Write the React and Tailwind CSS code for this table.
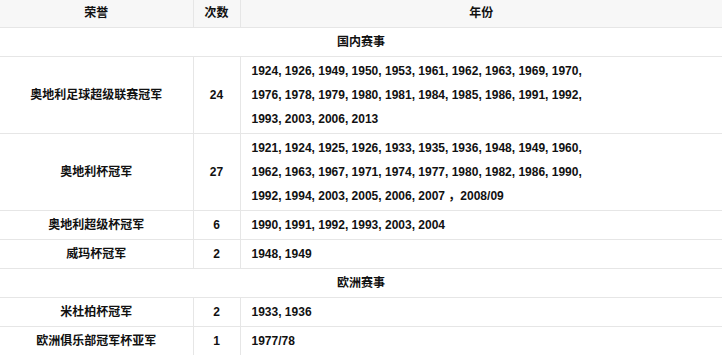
import React from "react";

const rows = [
  { section: "国内赛事" },
  {
    name: "奥地利足球超级联赛冠军",
    count: "24",
    years: [
      "1924, 1926, 1949, 1950, 1953, 1961, 1962, 1963, 1969, 1970,",
      "1976, 1978, 1979, 1980, 1981, 1984, 1985, 1986, 1991, 1992,",
      "1993, 2003, 2006, 2013",
    ],
  },
  {
    name: "奥地利杯冠军",
    count: "27",
    years: [
      "1921, 1924, 1925, 1926, 1933, 1935, 1936, 1948, 1949, 1960,",
      "1962, 1963, 1967, 1971, 1974, 1977, 1980, 1982, 1986, 1990,",
      "1992, 1994, 2003, 2005, 2006, 2007 ，2008/09",
    ],
  },
  { name: "奥地利超级杯冠军", count: "6", years: ["1990, 1991, 1992, 1993, 2003, 2004"] },
  { name: "威玛杯冠军", count: "2", years: ["1948, 1949"] },
  { section: "欧洲赛事" },
  { name: "米杜柏杯冠军", count: "2", years: ["1933, 1936"] },
  { name: "欧洲俱乐部冠军杯亚军", count: "1", years: ["1977/78"] },
];

export default function App() {
  return (
    <div
      className="w-[722px] h-[355px] overflow-hidden bg-white text-[#111] text-[12px] font-bold"
      style={{ fontFamily: '"Liberation Sans", "Noto Sans CJK SC", sans-serif' }}
    >
      <table className="w-[722px] table-fixed border-collapse">
        <colgroup>
          <col className="w-[193px]" />
          <col className="w-[47px]" />
          <col />
        </colgroup>
        <thead>
          <tr className="bg-[#f7f7f7]">
            <th className="border border-[#e6e6e6] border-l-0 border-t-0 leading-[27px] font-bold">荣誉</th>
            <th className="border border-[#e6e6e6] border-t-0 leading-[27px] font-bold">次数</th>
            <th className="border border-[#e6e6e6] border-r-0 border-t-0 leading-[27px] font-bold">年份</th>
          </tr>
        </thead>
        <tbody>
          {rows.map((r, i) =>
            r.section ? (
              <tr key={i}>
                <td colSpan={3} className="border border-[#e6e6e6] border-x-0 py-[2px] leading-[24px] text-center">
                  {r.section}
                </td>
              </tr>
            ) : (
              <tr key={i}>
                <td className="border border-[#e6e6e6] border-l-0 py-[2px] leading-[24px] text-center">{r.name}</td>
                <td className="border border-[#e6e6e6] py-[2px] leading-[24px] text-center">{r.count}</td>
                <td className="border border-[#e6e6e6] border-r-0 py-[2px] pl-[11px] leading-[24px]">
                  {r.years.map((y, j) => (
                    <div key={j}>{y}</div>
                  ))}
                </td>
              </tr>
            )
          )}
        </tbody>
      </table>
    </div>
  );
}
